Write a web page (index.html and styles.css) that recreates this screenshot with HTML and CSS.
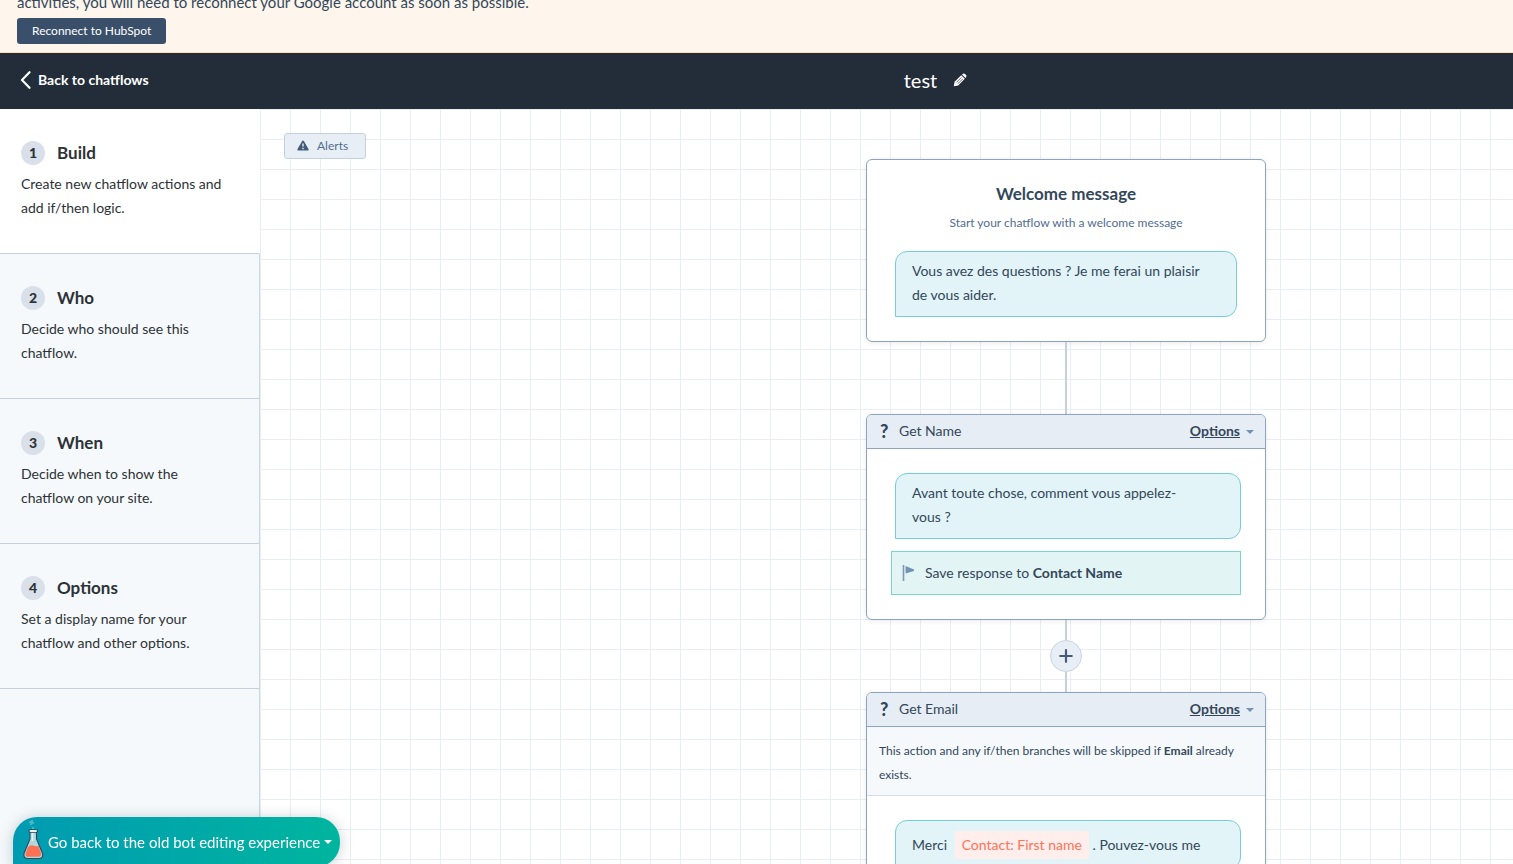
FILE: index.html
```html
<!DOCTYPE html>
<html lang="en">
<head>
<meta charset="utf-8">
<title>test - Chatflows</title>
<link rel="stylesheet" href="styles.css">
</head>
<body>
<div class="banner">
  <p>activities, you will need to reconnect your Google account as soon as possible.</p>
  <button type="button" class="btn-reconnect">Reconnect to HubSpot</button>
</div>
<header class="topbar">
  <a href="#" class="back">
    <svg width="12" height="18" viewBox="0 0 12 18"><path d="M9.5 1.200L2 9L9.500 16.800" fill="none" stroke="#fff" stroke-width="2.200" stroke-linecap="round" stroke-linejoin="round"/></svg>
    <span>Back to chatflows</span>
  </a>
  <div class="title">
    <h1>test</h1>
    <button type="button" class="edit" aria-label="Edit name">
      <svg width="14" height="14" viewBox="0 0 14 14">
        <path d="M.8 13.200L1.600 8.800L8.200 2.200L11.800 5.800L5.200 12.400Z" fill="#fff"/>
        <path d="M9 1.500L10 .7Q11 0 12 1L13 2Q14 3 13.200 4L12.500 5Z" fill="#fff"/>
        <path d="M3.400 9.400L8.400 4.400M4.800 10.800L9.800 5.800" stroke="#222d39" stroke-width=".7"/>
      </svg>
    </button>
  </div>
</header>
<div class="main">
  <nav class="sidebar">
    <a href="#" class="step active">
      <span class="step-head"><span class="num">1</span><b>Build</b></span>
      <span class="desc">Create new chatflow actions and<br>add if/then logic.</span>
    </a>
    <a href="#" class="step">
      <span class="step-head"><span class="num">2</span><b>Who</b></span>
      <span class="desc">Decide who should see this<br>chatflow.</span>
    </a>
    <a href="#" class="step">
      <span class="step-head"><span class="num">3</span><b>When</b></span>
      <span class="desc">Decide when to show the<br>chatflow on your site.</span>
    </a>
    <a href="#" class="step">
      <span class="step-head"><span class="num">4</span><b>Options</b></span>
      <span class="desc">Set a display name for your<br>chatflow and other options.</span>
    </a>
    <div class="rest"></div>
  </nav>
  <div class="canvas">
    <button type="button" class="alerts">
      <svg width="12" height="11" viewBox="0 0 12 11"><path d="M6 .5Q6.6.5 7 1.2L11.6 9.2Q12 10.6 10.8 10.6H1.2Q0 10.6.4 9.2L5 1.2Q5.4.5 6 .5Z" fill="#425b76"/><path d="M6 3.6V6.6M6 7.8V9.2" stroke="#e5edf5" stroke-width="1.4"/></svg>
      <span>Alerts</span>
    </button>
    <div class="flow">
      <section class="card welcome">
        <h2>Welcome message</h2>
        <p class="sub">Start your chatflow with a welcome message</p>
        <div class="bubble">Vous avez des questions ? Je me ferai un plaisir<br>de vous aider.</div>
      </section>
      <div class="line long"></div>
      <section class="card">
        <div class="card-head">
          <span class="q">?</span><span class="name">Get Name</span>
          <button type="button" class="options"><u>Options</u><i class="caret"></i></button>
        </div>
        <div class="card-body">
          <div class="bubble">Avant toute chose, comment vous appelez-<br>vous ?</div>
          <div class="save">
            <svg width="13" height="16" viewBox="0 0 13 16"><path d="M1.5 0V16" stroke="#7c98b6" stroke-width="1.6"/><path d="M3.6 1L12 4.6V6L3.6 8.6Z" fill="#7192b3"/></svg>
            <span>Save response to <b>Contact Name</b></span>
          </div>
        </div>
      </section>
      <div class="line"></div>
      <button type="button" class="plus" aria-label="Add action">
        <svg width="14" height="14" viewBox="0 0 14 14"><path d="M7 1.2V12.8M1.2 7H12.8" stroke="#425b76" stroke-width="2.2" stroke-linecap="round"/></svg>
      </button>
      <div class="line"></div>
      <section class="card">
        <div class="card-head">
          <span class="q">?</span><span class="name">Get Email</span>
          <button type="button" class="options"><u>Options</u><i class="caret"></i></button>
        </div>
        <p class="note">This action and any if/then branches will be skipped if <b>Email</b> already<br>exists.</p>
        <div class="card-body">
          <div class="bubble">Merci <span class="token">Contact: First name</span> . Pouvez-vous me</div>
        </div>
      </section>
    </div>
  </div>
</div>
<button type="button" class="old-bot">
  <svg width="22" height="46" viewBox="0 0 22 46">
    <path d="M7 2H9V1H11V3H12V5H10V6H8V4H7ZM10 8H12V10H10Z" fill="#3fb9c9"/>
    <path d="M8 12V20L2 34.500Q1.300 39 5 39.500H17.500Q21.500 39 20.500 34.500L14.500 20V12Z" fill="#b0d9df" stroke="#33475b" stroke-width="1.100"/>
    <path d="M6 28Q8.500 25.500 11 26.500T16.500 27L19 34.500Q19.500 37.500 17 37.800H5.300Q3 37.500 3.500 34.500Z" fill="#ff7152"/>
    <path d="M8.200 12H14.300" stroke="#33475b" stroke-width="3.600" stroke-linecap="round"/>
    <path d="M8.500 12H14" stroke="#e8f5f7" stroke-width="2" stroke-linecap="round"/>
    <path d="M10.500 14V22" stroke="#dff4f5" stroke-width="1.600"/>
  </svg>
  <span>Go back to the old bot editing experience</span>
  <i class="caret"></i>
</button>
</body>
</html>
```
FILE: styles.css
```css
*{
	box-sizing:border-box;
}
body{
	margin:0;
	height:100vh;
	display:flex;
	flex-direction:column;
	overflow:hidden;
	font:14px/24px Lato,"Liberation Sans",sans-serif;
	color:#33475b;
	background:#fff;
}
h1,h2,p{
	margin:0;
}
button{
	font-family:inherit;
	cursor:pointer;
}
svg{
	display:block;
	flex:none;
}
a{
	color:inherit;
	text-decoration:none;
}

/* warning banner, scrolled under the top edge */
.banner{
	flex:none;
	padding:0 17px 8px;
	background:#fef6ec;
	border-bottom:1px solid #fae0b5;
}
.banner p{
	margin:-10px 0 4px;
	font-size:15px;
}
.btn-reconnect{
	display:block;
	height:26px;
	padding:0 15px 2px;
	border:0;
	border-radius:3px;
	background:#3a506a;
	color:#fff;
	font-size:12px;
}

.topbar{
	flex:none;
	display:flex;
	align-items:center;
	height:56px;
	padding-bottom:2px;
	background:#222d39;
	color:#fff;
}
.back{
	display:flex;
	align-items:center;
	gap:6px;
	width:358px;
	padding-left:20px;
	font-weight:bold;
}
.title{
	display:flex;
	align-items:center;
	gap:16px;
	margin:0 auto;
}
.title h1{
	font-size:20px;
	font-weight:normal;
}
.edit{
	padding:0;
	border:0;
	background:none;
}

.main{
	flex:1;
	display:flex;
	min-height:0;
}
.sidebar{
	flex:none;
	display:flex;
	flex-direction:column;
	width:260px;
	color:#2d3236;
}
.step{
	flex:none;
	display:block;
	padding:32px 20px 33px 21px;
	background:#f5f9fb;
	border-right:1px solid #cbd6e2;
	border-bottom:1px solid #c3d1df;
}
.step.active{
	background:#fff;
	border-right-color:#fff;
}
.step-head{
	display:flex;
	align-items:center;
	gap:12px;
	margin-bottom:7px;
	font-size:17px;
}
.num{
	width:24px;
	height:24px;
	border-radius:50%;
	background:#dae0e9;
	text-align:center;
	font-size:14px;
	font-weight:900;
}
.desc{
	display:block;
}
.rest{
	flex:1;
	background:#f5f9fb;
	border-right:1px solid #cbd6e2;
}

/* grid paper behind the flow */
.canvas{
	position:relative;
	flex:1;
	padding:50px 0 0 359px;
	overflow:hidden;
	background:linear-gradient(#e8eef4 1px,transparent 1px) 0 0/30px 30px,linear-gradient(90deg,#e8eef4 1px,transparent 1px) 0 0/30px 30px;
}
.alerts{
	position:absolute;
	top:24px;
	left:24px;
	display:flex;
	align-items:center;
	gap:8px;
	height:26px;
	padding:0 17px 1px 12px;
	border:1px solid #c3d1df;
	border-radius:3px;
	background:#e8eef5;
	color:#506e91;
	font-size:12px;
}
.flow{
	display:flex;
	flex-direction:column;
	align-items:center;
}
.card{
	flex:none;
	width:400px;
	border:1px solid #8da4be;
	border-radius:6px;
	background:#fff;
	box-shadow:0 1px 5px rgba(45,62,80,.1);
	overflow:hidden;
}
.welcome{
	padding:22px 28px 24px;
	text-align:center;
}
.welcome h2{
	font-size:17px;
	line-height:24px;
}
.sub{
	margin:5px 0 16px;
	color:#506e91;
	font-size:12px;
}
.line{
	width:2px;
	height:20px;
	background:#c3d1df;
}
.line.long{
	height:72px;
}
.card-head{
	display:flex;
	align-items:center;
	height:34px;
	padding:0 11px 2px 13px;
	background:#e7edf4;
	border-bottom:1px solid #8da4be;
}
.q{
	width:19px;
	font-size:18px;
	font-weight:900;
}
.options{
	display:flex;
	align-items:center;
	gap:6px;
	margin-left:auto;
	padding:0;
	border:0;
	background:none;
	color:#33475b;
	font-size:14px;
	font-weight:bold;
}
.caret{
	margin-top:2px;
	border:4px solid transparent;
	border-top-color:#7192b3;
	border-bottom:0;
}
.card-body{
	padding:24px;
}
.bubble{
	padding:7px 16px 9px;
	border:1px solid #74cdd8;
	border-radius:12px 12px 12px 0;
	background:#e2f4f7;
	text-align:left;
}
.card-body .bubble{
	margin-left:4px;
}
.save{
	display:flex;
	align-items:center;
	gap:10px;
	height:44px;
	margin-top:12px;
	padding-left:10px;
	border:1px solid #79d6cb;
	background:#e2f4f4;
}
.plus{
	display:flex;
	align-items:center;
	justify-content:center;
	width:32px;
	height:32px;
	padding:0;
	border:1px solid #c8d5e2;
	border-radius:50%;
	background:#e8eef5;
}
.note{
	padding:12px 12px 8px;
	background:#f5f9fb;
	border-bottom:1px solid #d3dde7;
	font-size:12px;
}
.token{
	display:inline-block;
	height:28px;
	margin:3px 0 0 4px;
	padding:2px 7px;
	border-radius:2px;
	background:#ffeeec;
	color:#ff7358;
}

.old-bot{
	position:fixed;
	left:13px;
	bottom:-3px;
	display:flex;
	align-items:center;
	gap:4px;
	height:50px;
	padding:0 8px 0 9px;
	border:0;
	border-radius:24px 24px 24px 0;
	background:linear-gradient(90deg,#009bb2,#00b59e);
	box-shadow:0 1px 14px rgba(45,62,80,.25);
	color:#fff;
	font-size:15px;
}
.old-bot .caret{
	margin-top:0;
	border-top-color:#fff;
}
```
